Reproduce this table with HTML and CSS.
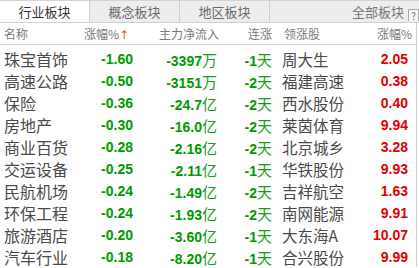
FILE: index.html
```html
<!DOCTYPE html>
<html lang="zh-CN">
<head>
<meta charset="utf-8">
<link rel="stylesheet" href="styles.css">
</head>
<body>
<div class="panel">
  <div class="tabs">
    <div class="tab active">行业板块</div>
    <div class="tab">概念板块</div>
    <div class="tab">地区板块</div>
    <div class="tab-rest">
      <span class="all">全部板块</span>
      <span class="help">?</span>
    </div>
  </div>
  <div class="table">
    <div class="row head">
      <div class="c name">名称</div>
      <div class="c zf h-zf">涨幅%<span class="arrow">↑</span></div>
      <div class="c flow h-flow">主力净流入</div>
      <div class="c lz">连涨</div>
      <div class="c lead h-lead">领涨股</div>
      <div class="c zf2 h-zf2">涨幅%</div>
    </div>
    <div class="body">
      <div class="row"><div class="c name">珠宝首饰</div><div class="c zf g">-1.60</div><div class="c flow g">-3397<span class="u">万</span></div><div class="c lz g">-1<span class="u">天</span></div><div class="c lead">周大生</div><div class="c zf2 r">2.05</div></div>
      <div class="row"><div class="c name">高速公路</div><div class="c zf g">-0.50</div><div class="c flow g">-3151<span class="u">万</span></div><div class="c lz g">-2<span class="u">天</span></div><div class="c lead">福建高速</div><div class="c zf2 r">0.38</div></div>
      <div class="row"><div class="c name">保险</div><div class="c zf g">-0.36</div><div class="c flow g">-24.7<span class="u">亿</span></div><div class="c lz g">-2<span class="u">天</span></div><div class="c lead">西水股份</div><div class="c zf2 r">0.40</div></div>
      <div class="row"><div class="c name">房地产</div><div class="c zf g">-0.30</div><div class="c flow g">-16.0<span class="u">亿</span></div><div class="c lz g">-2<span class="u">天</span></div><div class="c lead">莱茵体育</div><div class="c zf2 r">9.94</div></div>
      <div class="row"><div class="c name">商业百货</div><div class="c zf g">-0.28</div><div class="c flow g">-2.16<span class="u">亿</span></div><div class="c lz g">-2<span class="u">天</span></div><div class="c lead">北京城乡</div><div class="c zf2 r">3.28</div></div>
      <div class="row"><div class="c name">交运设备</div><div class="c zf g">-0.25</div><div class="c flow g">-2.11<span class="u">亿</span></div><div class="c lz g">-1<span class="u">天</span></div><div class="c lead">华铁股份</div><div class="c zf2 r">9.93</div></div>
      <div class="row"><div class="c name">民航机场</div><div class="c zf g">-0.24</div><div class="c flow g">-1.49<span class="u">亿</span></div><div class="c lz g">-2<span class="u">天</span></div><div class="c lead">吉祥航空</div><div class="c zf2 r">1.63</div></div>
      <div class="row"><div class="c name">环保工程</div><div class="c zf g">-0.24</div><div class="c flow g">-1.93<span class="u">亿</span></div><div class="c lz g">-2<span class="u">天</span></div><div class="c lead">南网能源</div><div class="c zf2 r">9.91</div></div>
      <div class="row"><div class="c name">旅游酒店</div><div class="c zf g">-0.20</div><div class="c flow g">-3.60<span class="u">亿</span></div><div class="c lz g">-1<span class="u">天</span></div><div class="c lead">大东海A</div><div class="c zf2 r">10.07</div></div>
      <div class="row"><div class="c name">汽车行业</div><div class="c zf g">-0.18</div><div class="c flow g">-8.20<span class="u">亿</span></div><div class="c lz g">-1<span class="u">天</span></div><div class="c lead">合兴股份</div><div class="c zf2 r">9.99</div></div>
    </div>
  </div>
</div>
</body>
</html>
```
FILE: styles.css
```css
* { box-sizing: border-box; }
html, body { margin: 0; padding: 0; background: #fff; }
body {
  width: 419px;
  height: 268px;
  overflow: hidden;
  font-family: "Noto Sans CJK SC", "Liberation Sans", sans-serif;
}
.panel { width: 419px; }
.tabs {
  display: flex;
  height: 23px;
  border-top: 1px solid #d4d4d4;
  border-bottom: 1px solid #d0d0d0;
  background: #ededed;
  font-size: 13px;
  color: #555;
}
.tab {
  width: 90px;
  display: flex;
  align-items: center;
  justify-content: center;
  border-right: 1px solid #d0d0d0;
  color: #6a6a6a;
}
.tab.active { background: #fff; color: #333; }
.tab-rest {
  flex: 1;
  display: flex;
  align-items: center;
  justify-content: flex-end;
  gap: 4px;
  color: #777;
}
.help {
  width: 11px;
  height: 12px;
  margin-top: 6px;
  border: 1px solid #aaa;
  border-bottom: none;
  font-size: 10px;
  line-height: 11px;
  text-align: center;
  color: #777;
  background: #f6f6f6;
}
.table {
  width: 417px;
  border-right: 1px solid #d0d0d0;
}
.row {
  display: grid;
  grid-template-columns: 90px 43px 84px 55px 10px 80px 46px;
  grid-template-areas: "name zf flow lz . lead zf2";
  height: 22px;
  align-items: center;
}
.head {
  height: 22px;
  border-bottom: 1px solid #d6d6d6;
  font-size: 12px;
  color: #7a7a7a;
}
.body { padding-top: 2px; }
.c { white-space: nowrap; }
.name { grid-area: name; padding-left: 4px; }
.zf { grid-area: zf; text-align: right; }
.flow { grid-area: flow; text-align: right; }
.lz { grid-area: lz; text-align: right; }
.lead { grid-area: lead; }
.zf2 { grid-area: zf2; text-align: right; }
.h-zf { margin-right: 4px; margin-left: -20px; }
.h-flow { margin-right: -2px; }
.h-lead { padding-left: 2px; }
.h-zf2 { margin-right: -4px; }
.arrow { color: #ff5a00; font-size: 12px; margin-left: 0; font-family: "DejaVu Sans", sans-serif; }
.body .name, .body .lead {
  font-size: 16px;
  color: #4a4a4a;
}
.body .lead { font-size: 15.5px; }
.g, .r {
  font-family: "Liberation Sans", Arial, sans-serif;
  font-weight: bold;
  font-size: 14px;
}
.g { color: #009a00; }
.r { color: #e00000; }
.u {
  font-family: "Noto Sans CJK SC", sans-serif;
  font-weight: normal;
  font-size: 15px;
  color: #1a9a1a;
}
```
